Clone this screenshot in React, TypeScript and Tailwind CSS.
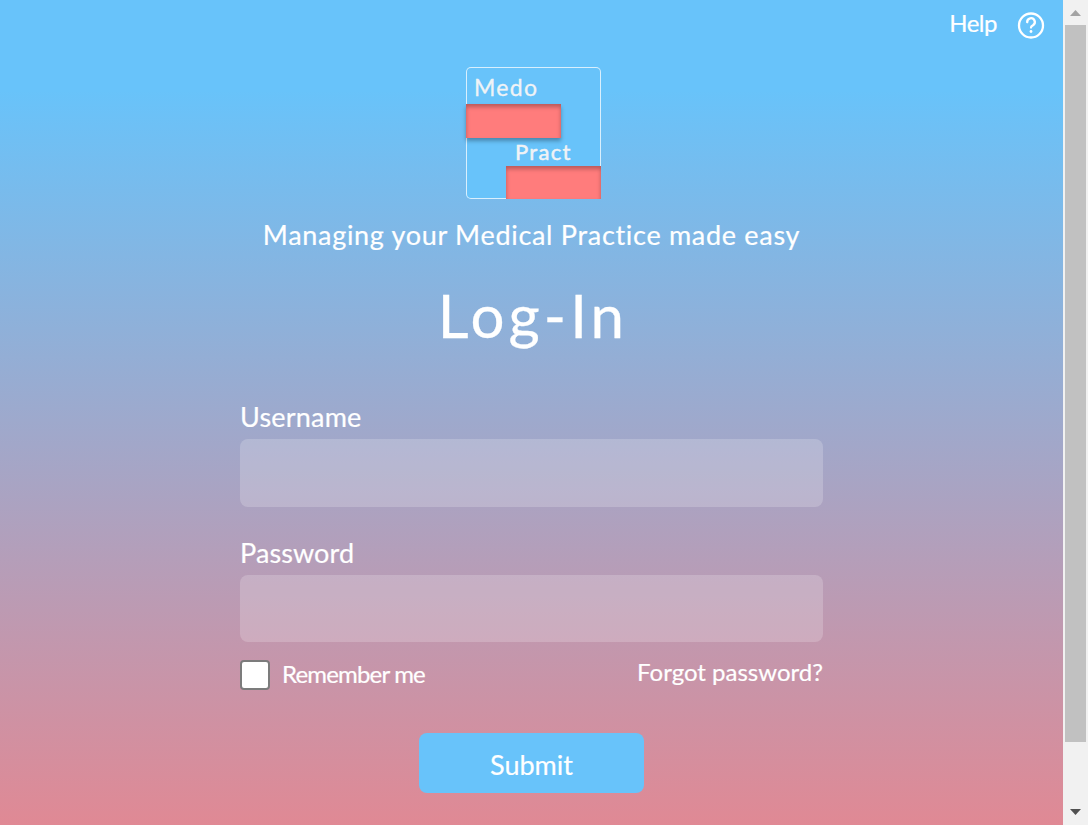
export default function App() {
  return (
    <div className="flex h-[825px] w-[1088px] overflow-hidden font-['Lato',sans-serif] text-white [-webkit-text-stroke:0.2px_currentColor]">
      <main className="flex h-[825px] w-[1063px] flex-col items-center bg-linear-to-b/srgb from-[#68c3fa] from-[90px] to-[#ff7a7a] to-[1015px]">
        <header className="flex h-[67px] w-full items-start justify-end pr-[18px]">
          <a className="mt-[5px] mr-[20px] text-2xl leading-9 tracking-[-0.5px]">Help</a>
          <svg className="mt-[11px]" width="28" height="28" viewBox="0 0 28 28" fill="none" stroke="currentColor" strokeWidth="2.3" strokeLinecap="round">
            <circle cx="14" cy="14.500" r="12" />
            <path d="M10.200 11.200a3.800 3.800 0 1 1 5.800 3c-1.400.8-2 1.400-2 2.300" />
            <circle cx="14" cy="20.500" r="1.400" fill="currentColor" stroke="none" />
          </svg>
        </header>
        <div className="ml-[4px] flex h-[132px] w-[135px] flex-col rounded-[5px] bg-[#68c3fa] text-[#f0f3f6] shadow-[inset_0_0_0_1px_#d9effd]">
          <span className="h-[37px] pl-[8px] text-[23px] leading-[41px] tracking-[1.3px] [-webkit-text-stroke:0.3px_currentColor]">Medo</span>
          <div className="h-[34px] w-[95px] shrink-0 bg-[#ff7c7c] shadow-[0_3px_4px_rgba(0,0,0,0.3),inset_0_3px_4px_rgba(0,0,0,0.28)]" />
          <span className="h-[28px] pl-[49px] text-[22px] leading-[28px] tracking-[1.3px] [-webkit-text-stroke:0.5px_currentColor]">Pract</span>
          <div className="h-[33px] w-[95px] shrink-0 self-end bg-[#ff7c7c] shadow-[inset_0_3px_4px_rgba(0,0,0,0.28)]" />
        </div>
        <p className="mt-[18px] h-9 text-[27px] leading-9 tracking-[0.7px] whitespace-nowrap">Managing your Medical Practice made easy</p>
        <h1 className="mt-[26px] ml-[3px] h-[72px] text-[60px] leading-[72px] tracking-[4.1px] whitespace-nowrap [-webkit-text-stroke:0.3px_currentColor]">Log-In</h1>
        <form className="mt-[48px] flex w-[583px] flex-col">
          <label className="h-10 text-[27px] leading-[36px] tracking-[0.2px]">Username</label>
          <div className="h-[68px] rounded-lg bg-white/20" />
          <label className="mt-7 h-10 text-[27px] leading-[36px] tracking-[0.1px]">Password</label>
          <div className="h-[67px] rounded-lg bg-white/20" />
          <div className="mt-[18px] flex h-[30px] items-start justify-between text-[24px] leading-[30px]">
            <label className="flex items-center gap-3">
              <span className="size-[30px] rounded-[4px] border-2 border-[#7c7c7c] bg-white" />
              <span className="-mt-[2px] tracking-[-0.82px]">Remember me</span>
            </label>
            <a className="-mt-[3px]">Forgot password?</a>
          </div>
          <button type="button" className="mt-[43px] h-[60px] w-[225px] self-center rounded-lg bg-[#68c3fa] text-[27px] leading-[63px]">Submit</button>
        </form>
      </main>
      <aside className="flex h-[825px] w-[25px] flex-col items-center bg-[#f1f1f1]">
        <div className="flex h-[25px] w-full items-center justify-center">
          <svg width="11" height="6" viewBox="0 0 11 6" fill="#a3a3a3"><path d="M5.5 0 11 6H0Z" /></svg>
        </div>
        <div className="h-[717px] w-[21px] bg-[#c1c1c1]" />
        <div className="mt-auto flex h-[26px] w-full items-center justify-center">
          <svg width="11" height="6" viewBox="0 0 11 6" fill="#505050"><path d="M0 0h11L5.500 6Z" /></svg>
        </div>
      </aside>
    </div>
  );
}
